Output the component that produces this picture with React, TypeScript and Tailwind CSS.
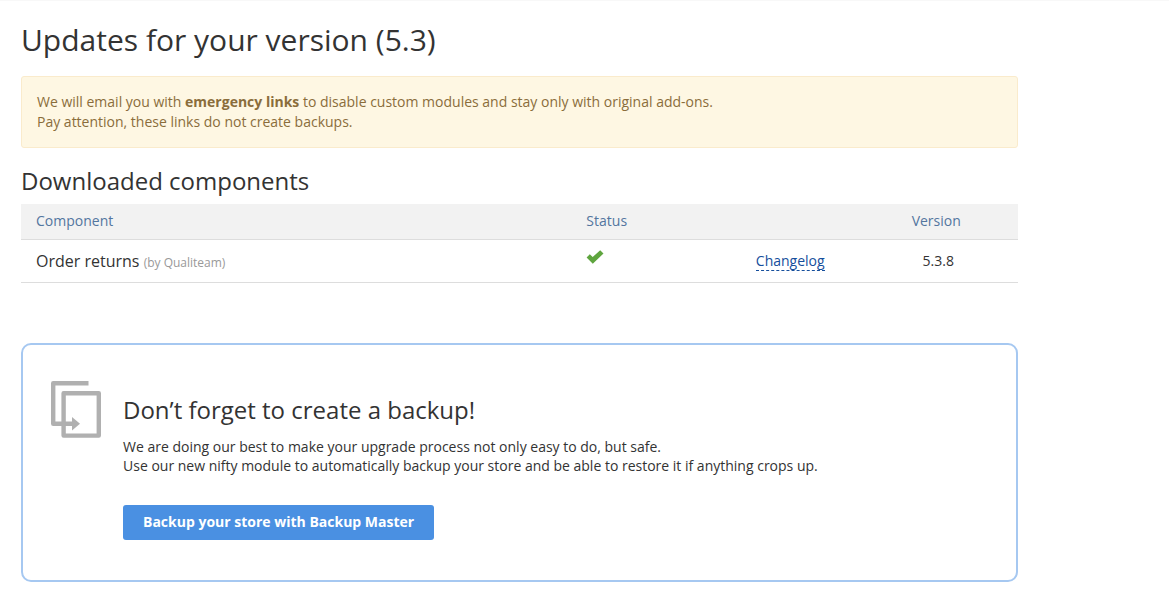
function CheckIcon() {
  return (
    <svg width="18" height="14" viewBox="0 0 18 14" role="img" aria-label="Installed">
      <path d="M0.6 7.4 L3.8 4.2 L6.7 7 L14.2 0.2 L17.5 3.5 L6.8 13.8 Z" fill="#5fa53f" />
    </svg>
  );
}

function BackupIcon() {
  return (
    <svg
      width="50"
      height="57"
      viewBox="0 0 50 57"
      fill="none"
      stroke="#b0b0b0"
      strokeWidth="4.4"
      strokeLinejoin="round"
      aria-hidden="true"
      className="shrink-0"
    >
      <path d="M37.5 2.2 H2.2 V42.7 H22" />
      <rect x="12.6" y="12.2" width="35.2" height="42.4" />
      <path d="M21 36 L29 42.7 L21 49.4 Z" fill="#b0b0b0" stroke="none" />
    </svg>
  );
}

const components = [{ name: "Order returns", author: "Qualiteam", version: "5.3.8" }];

export default function App() {
  return (
    <main className="border-t border-[#f8f8f8] bg-white pt-4 pr-[151px] pb-4 pl-[21px] font-['Open_Sans',sans-serif] text-sm leading-5 text-[#333333]">
      <h1 className="text-[30px] leading-[46px]">Updates for your version (5.3)</h1>

      <div
        role="alert"
        className="mt-[13px] rounded-[3px] border border-[#faebcc] bg-[#fef7e3] p-[15px] text-[#8a6d3b]"
      >
        <p>
          We will email you with <strong className="font-bold">emergency links</strong> to disable
          custom modules and stay only with original add-ons.
        </p>
        <p>Pay attention, these links do not create backups.</p>
      </div>

      <h2 className="mt-[15px] text-2xl leading-9">Downloaded components</h2>

      <table className="mt-[5px] w-full table-fixed border-collapse text-left">
        <colgroup>
          <col className="w-[55%]" />
          <col className="w-[17%]" />
          <col className="w-[12%]" />
          <col className="w-[16%]" />
        </colgroup>
        <thead>
          <tr className="h-[35px] border-b border-[#dddddd] bg-[#f2f2f2] text-[#53769f]">
            <th className="px-[15px] font-normal">Component</th>
            <th className="px-[17px] font-normal">Status</th>
            <th className="font-normal" aria-label="Changes" />
            <th className="pr-1 text-center font-normal">Version</th>
          </tr>
        </thead>
        <tbody>
          {components.map((item) => (
            <tr key={item.name} className="h-[43px] border-b border-[#dddddd]">
              <td className="px-[15px] text-base">
                {item.name} <span className="text-xs text-[#999999]">(by {item.author})</span>
              </td>
              <td className="px-[17px] pb-2">
                <CheckIcon />
              </td>
              <td className="px-[17px]">
                <a
                  href="#changelog"
                  className="inline-block border-b border-dashed border-[#154e9c] leading-[18px] text-[#154e9c]"
                >
                  Changelog
                </a>
              </td>
              <td className="text-center">{item.version}</td>
            </tr>
          ))}
        </tbody>
      </table>

      <section className="mt-[60px] flex gap-[22px] rounded-[10px] border-2 border-[#a6c8f1] px-7 pt-9 pb-10">
        <BackupIcon />
        <div>
          <h2 className="mt-[11px] text-2xl leading-9">Don’t forget to create a backup!</h2>
          <p className="mt-[9px] leading-[19px]">
            We are doing our best to make your upgrade process not only easy to do, but safe.
          </p>
          <p className="leading-[19px]">
            Use our new nifty module to automatically backup your store and be able to restore it if
            anything crops up.
          </p>
          <button
            type="button"
            className="mt-[30px] h-[35px] rounded-[3px] bg-[#4a90e2] px-5 font-bold text-white"
          >
            Backup your store with Backup Master
          </button>
        </div>
      </section>
    </main>
  );
}
